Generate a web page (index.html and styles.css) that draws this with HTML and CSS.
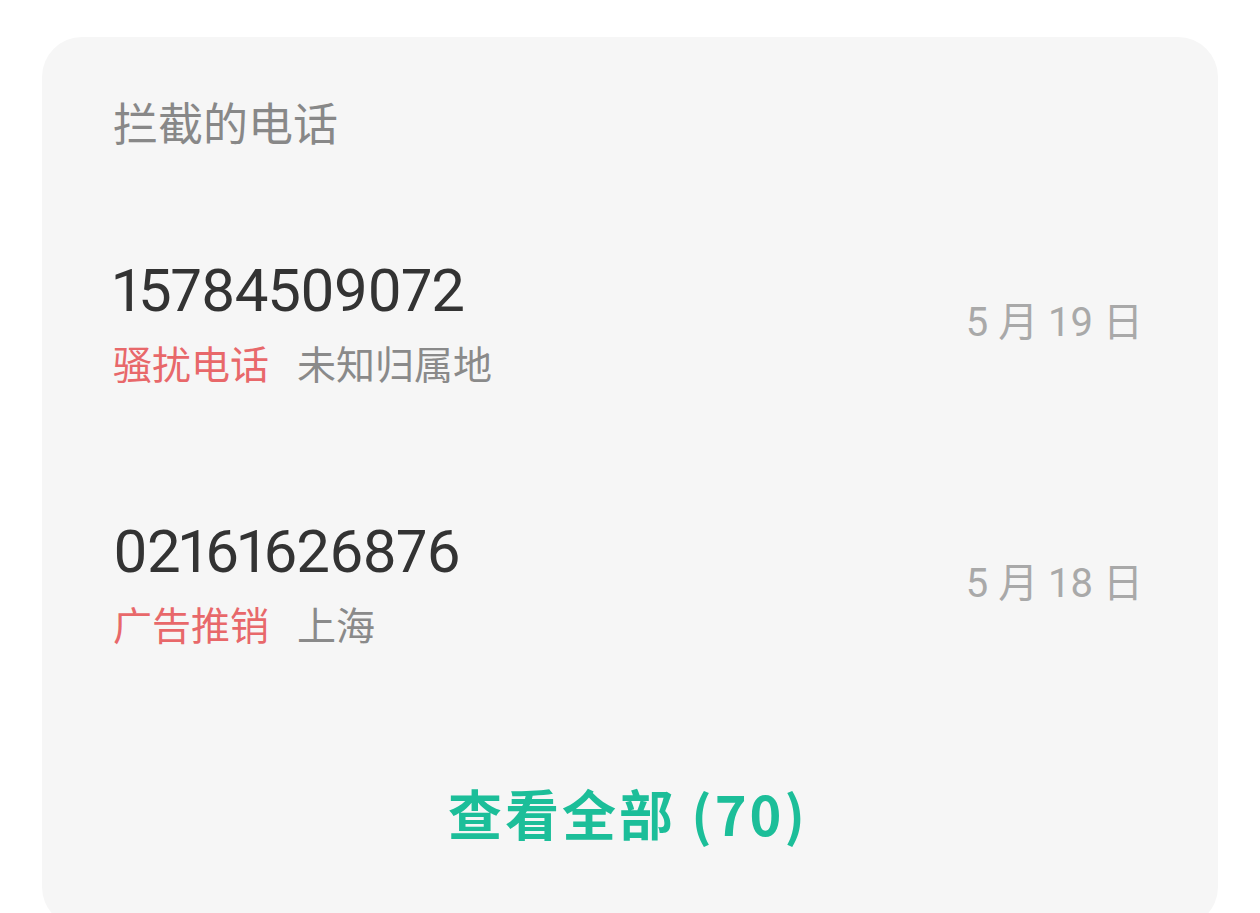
FILE: index.html
```html
<!DOCTYPE html>
<html lang="zh-CN">
<head>
<meta charset="utf-8">
<title>拦截的电话</title>
<link rel="stylesheet" href="styles.css">
</head>
<body>
  <section class="card">
    <h2 class="card-title">拦截的电话</h2>
    <ul class="call-list">
      <li class="call">
        <div class="call-info">
          <div class="call-number">15784509072</div>
          <div class="call-meta">
            <span class="call-tag">骚扰电话</span>
            <span class="call-region">未知归属地</span>
          </div>
        </div>
        <div class="call-date">5 月 19 日</div>
      </li>
      <li class="call">
        <div class="call-info">
          <div class="call-number">02161626876</div>
          <div class="call-meta">
            <span class="call-tag">广告推销</span>
            <span class="call-region">上海</span>
          </div>
        </div>
        <div class="call-date">5 月 18 日</div>
      </li>
    </ul>
    <a class="view-all" href="#">查看全部 (70)</a>
  </section>
</body>
</html>
```

FILE: styles.css
```css
* {
  box-sizing: border-box;
}

html, body {
  margin: 0;
  height: 100%;
  background: #ffffff;
  overflow: hidden;
}

body {
  padding: 37px 42px 0;
  font-family: "Roboto", "Noto Sans CJK SC", sans-serif;
}

.card {
  background: #f6f6f6;
  border-radius: 40px;
  height: 890px;
  padding: 55px 75px 0 71px;
  display: flex;
  flex-direction: column;
}

.card-title {
  margin: 0 0 104px;
  font-family: "Noto Sans CJK SC", sans-serif;
  font-weight: 400;
  font-size: 45px;
  line-height: 60px;
  color: #888888;
}

.call-list {
  list-style: none;
  margin: 0;
  padding: 0;
  display: flex;
  flex-direction: column;
  gap: 131px;
}

.call {
  display: flex;
  align-items: center;
  justify-content: space-between;
}

.call-info {
  display: flex;
  flex-direction: column;
  gap: 12px;
}

.call-number {
  font-size: 60px;
  line-height: 70px;
  color: #333333;
  letter-spacing: -1px;
  font-variant-numeric: proportional-nums;
}

.call-meta {
  display: flex;
  gap: 28px;
  font-family: "Noto Sans CJK SC", sans-serif;
  font-size: 39px;
  line-height: 48px;
}

.call-tag {
  color: #e8686a;
}

.call-region {
  color: #8a8a8a;
}

.call-date {
  font-size: 40px;
  line-height: 50px;
  color: #a9a9a9;
  margin-top: 4px;
}

.view-all {
  align-self: center;
  margin-top: 136px;
  font-family: "Noto Sans CJK SC", sans-serif;
  font-weight: 700;
  font-size: 54px;
  line-height: 60px;
  letter-spacing: 3px;
  color: #1cbe99;
  text-decoration: none;
}
```
